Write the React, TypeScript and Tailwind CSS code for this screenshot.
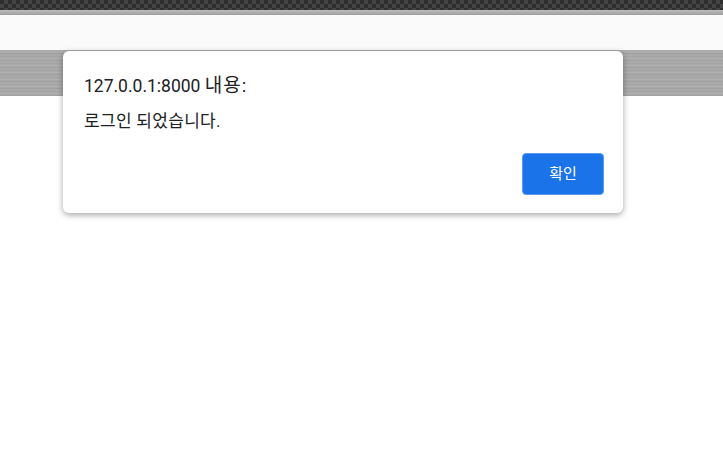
import React from "react";

export default function App() {
  return (
    <div className="relative w-[723px] h-[458px] overflow-hidden bg-white font-['Roboto','Noto_Sans_CJK_KR',sans-serif]">
      {/* carbon header strip */}
      <div className="h-[10px] bg-[#3a3a3a] bg-[repeating-conic-gradient(#444_0_25%,#2e2e2e_0_50%)] bg-[length:8px_8px]" />
      <div className="h-[5px] bg-[linear-gradient(#bdbdbd,#9c9c9c)]" />
      <div className="h-[35px] bg-[#fafafa]" />
      {/* brushed metal band */}
      <div className="h-[46px] bg-[#a9a9a9] bg-[repeating-linear-gradient(180deg,#a6a6a6_0px,#b3b3b3_2px,#9e9e9e_3px,#adadad_5px,#a2a2a2_7px)]" />

      {/* alert dialog */}
      <div className="absolute left-[63px] top-[51px] w-[560px] h-[162px] bg-white rounded-[6px] shadow-[0_2px_6px_rgba(0,0,0,0.35)] flex flex-col pl-[21px] pr-[19px]">
        <div className="pt-[24px] text-[17.5px] leading-[22px] text-[#202124]">
          127.0.0.1:8000 <span className="text-[19px] tracking-[1px]">내용:</span>
        </div>
        <div className="pt-[14px] text-[17px] leading-[20px] tracking-[0.3px] text-[#202124]">로그인 되었습니다.</div>
        <div className="flex justify-end mt-auto pb-[18px]">
          <button className="w-[82px] h-[42px] rounded-[4px] bg-[#1a73e8] border border-[#5b9cf0] text-white text-[15px]">
            확인
          </button>
        </div>
      </div>
    </div>
  );
}
